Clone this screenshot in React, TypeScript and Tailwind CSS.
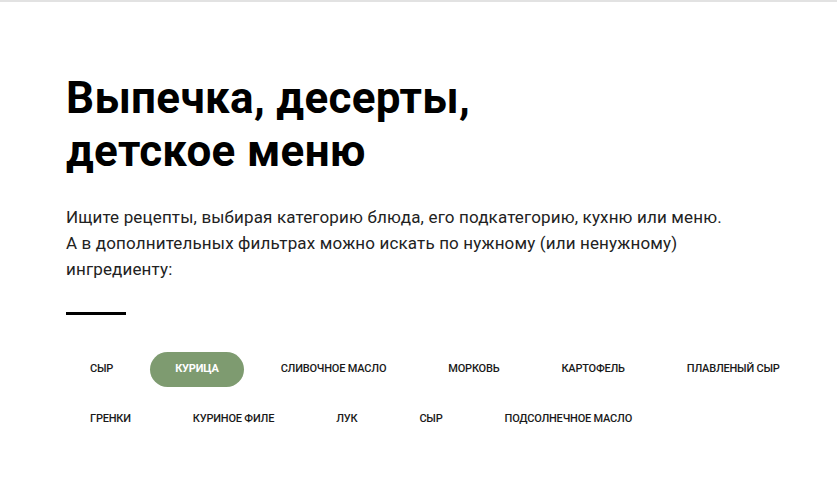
const tags = [
  'Сыр',
  'Курица',
  'Сливочное масло',
  'Морковь',
  'Картофель',
  'Плавленый сыр',
  'Гренки',
  'Куриное филе',
  'Лук',
  'Сыр',
  'Подсолнечное масло',
];

export default function App() {
  const active = 1;

  return (
    <div className="min-h-[490px] bg-white border-t-2 border-[#e2e2e2] font-['Roboto',sans-serif] text-[#1a1a1a]">
      <div className="pl-[66px] pr-4 pt-[70px]">
        <h1 className="text-[44px] leading-[53px] font-bold text-black tracking-[0.3px]">
          Выпечка, десерты,
          <br />
          детское меню
        </h1>

        <p className="mt-[26px] text-[17px] leading-[26px] text-[#222] tracking-[0.15px]">
          Ищите рецепты, выбирая категорию блюда, его подкатегорию, кухню или меню.
          <br />
          А в дополнительных фильтрах можно искать по нужному (или ненужному)
          <br />
          ингредиенту:
        </p>

        <div className="mt-[30px] w-[60px] h-[3px] bg-black" />

        {/* Ingredient tags */}
        <div className="-ml-px mt-[37px] flex flex-wrap gap-x-[12px] gap-y-[15px]">
          {tags.map((tag, i) => (
            <button
              key={i}
              className={`h-[35px] px-[25px] rounded-full text-[11px] uppercase tracking-[-0.2px] ${
                i === active ? 'bg-[#7e9b70] text-white font-bold' : 'text-[#1a1a1a] font-medium'
              }`}
            >
              {tag}
            </button>
          ))}
        </div>
      </div>
    </div>
  );
}
